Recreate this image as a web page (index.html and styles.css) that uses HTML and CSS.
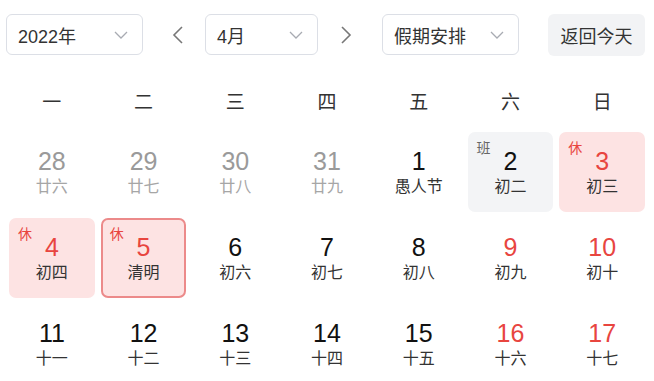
FILE: index.html
```html
<!DOCTYPE html>
<html lang="zh-CN">
<head>
<meta charset="utf-8">
<link rel="stylesheet" href="styles.css">
</head>
<body>
<div class="cal">
  <div class="toolbar">
    <div class="select sel-year"><span>2022年</span><svg class="chev" width="14" height="8" viewBox="0 0 14 8"><polyline points="1,1 7,7 13,1"/></svg></div>
    <div class="arrow arrow-prev"><svg width="12" height="18" viewBox="0 0 12 18"><polyline points="10,1 2,9 10,17"/></svg></div>
    <div class="select sel-month"><span>4月</span><svg class="chev" width="14" height="8" viewBox="0 0 14 8"><polyline points="1,1 7,7 13,1"/></svg></div>
    <div class="arrow arrow-next"><svg width="12" height="18" viewBox="0 0 12 18"><polyline points="2,1 10,9 2,17"/></svg></div>
    <div class="select sel-hol"><span>假期安排</span><svg class="chev" width="14" height="8" viewBox="0 0 14 8"><polyline points="1,1 7,7 13,1"/></svg></div>
    <div class="today">返回今天</div>
  </div>
  <div class="week">
    <div>一</div><div>二</div><div>三</div><div>四</div><div>五</div><div>六</div><div>日</div>
  </div>
  <div class="days">
    <div class="day other"><div class="num">28</div><div class="lunar">廿六</div></div>
    <div class="day other"><div class="num">29</div><div class="lunar">廿七</div></div>
    <div class="day other"><div class="num">30</div><div class="lunar">廿八</div></div>
    <div class="day other"><div class="num">31</div><div class="lunar">廿九</div></div>
    <div class="day"><div class="num">1</div><div class="lunar">愚人节</div></div>
    <div class="day work"><span class="tag">班</span><div class="num">2</div><div class="lunar">初二</div></div>
    <div class="day rest"><span class="tag">休</span><div class="num">3</div><div class="lunar">初三</div></div>

    <div class="day rest"><span class="tag">休</span><div class="num">4</div><div class="lunar">初四</div></div>
    <div class="day rest selected"><span class="tag">休</span><div class="num">5</div><div class="lunar">清明</div></div>
    <div class="day"><div class="num">6</div><div class="lunar">初六</div></div>
    <div class="day"><div class="num">7</div><div class="lunar">初七</div></div>
    <div class="day"><div class="num">8</div><div class="lunar">初八</div></div>
    <div class="day weekend"><div class="num">9</div><div class="lunar">初九</div></div>
    <div class="day weekend"><div class="num">10</div><div class="lunar">初十</div></div>

    <div class="day"><div class="num">11</div><div class="lunar">十一</div></div>
    <div class="day"><div class="num">12</div><div class="lunar">十二</div></div>
    <div class="day"><div class="num">13</div><div class="lunar">十三</div></div>
    <div class="day"><div class="num">14</div><div class="lunar">十四</div></div>
    <div class="day"><div class="num">15</div><div class="lunar">十五</div></div>
    <div class="day weekend"><div class="num">16</div><div class="lunar">十六</div></div>
    <div class="day weekend"><div class="num">17</div><div class="lunar">十七</div></div>
  </div>
</div>
</body>
</html>
```
FILE: styles.css
```css
* { box-sizing: border-box; }
html, body { margin: 0; padding: 0; background: #fff; }
body {
  font-family: "Liberation Sans", "Noto Sans CJK SC", sans-serif;
  color: #333;
  overflow: hidden;
}
.cal { padding: 14px 6px 0 6px; width: 654px; }

.toolbar { display: flex; align-items: center; height: 41px; }
.select {
  height: 41px;
  border: 1px solid #dcdfe6;
  border-radius: 6px;
  display: flex;
  align-items: center;
  justify-content: space-between;
  padding: 0 14px 0 11px;
  font-size: 18px;
  color: #333;
}
.sel-year { width: 137px; }
.sel-month { width: 113px; }
.sel-hol { width: 137px; }
.chev polyline { fill: none; stroke: #a8abb2; stroke-width: 1.3; }
.arrow { width: 24px; display: flex; justify-content: center; align-items: center; }
.arrow polyline { fill: none; stroke: #777; stroke-width: 1.6; }
.arrow-prev { margin: 0 15px 0 23px; }
.arrow-next { margin: 0 24px 0 16px; }
.today {
  margin-left: 29px;
  width: 97px;
  height: 42px;
  background: #f2f3f5;
  border-radius: 6px;
  display: flex;
  align-items: center;
  justify-content: center;
  font-size: 18px;
  color: #333;
}

.week {
  margin-top: 28px;
  display: grid;
  grid-template-columns: repeat(7, 1fr);
  padding: 0 3px;
  column-gap: 6px;
  height: 40px;
  line-height: 40px;
  text-align: center;
  font-size: 19px;
  color: #333;
}

.days {
  margin-top: 9px;
  display: grid;
  grid-template-columns: repeat(7, 1fr);
  padding: 0 3px;
  column-gap: 6px;
  row-gap: 6px;
}
.day {
  position: relative;
  height: 80px;
  border-radius: 7px;
  text-align: center;
  padding-top: 16px;
}
.num { font-size: 25px; line-height: 26px; color: #111; }
.lunar { margin-top: 3px; font-size: 16px; line-height: 20px; color: #333; }
.other .num { color: #9a9a9a; }
.other .lunar { color: #a6a6a6; }
.weekend .num { color: #e8453f; }
.work { background: #f3f4f6; }
.rest { background: #fde3e3; }
.rest .num { color: #e8453f; }
.selected { border: 2px solid #ec8a8a; padding-top: 14px; }
.tag {
  position: absolute;
  top: 9px;
  left: 9px;
  font-size: 14px;
  line-height: 14px;
}
.selected .tag { top: 7px; left: 7px; }
.work .tag { color: #666; }
.rest .tag { color: #e8453f; }
```
